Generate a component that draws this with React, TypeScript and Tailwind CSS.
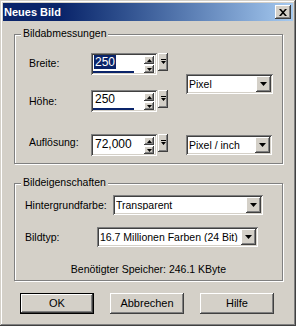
const raised =
  'shadow-[inset_-1px_-1px_#404040,inset_1px_1px_#ffffff,inset_-2px_-2px_#808080,inset_2px_2px_#d4d0c8]';
const sunken =
  'shadow-[inset_1px_1px_#808080,inset_-1px_-1px_#ffffff,inset_2px_2px_#404040,inset_-2px_-2px_#d4d0c8]';

function DownTriangle() {
  return (
    <svg width="7" height="4" viewBox="0 0 7 4">
      <path d="M0 0h7L3.5 4z" fill="#000" />
    </svg>
  );
}

function Dropdown({ value, width }: { value: string; width: number }) {
  return (
    <div className={`flex h-[20px] items-center bg-white ${sunken} pl-[3px] pr-[2px]`} style={{ width }}>
      <span className="flex-1 overflow-hidden whitespace-nowrap text-[10.5px] leading-none text-black">{value}</span>
      <div className={`flex h-[16px] w-[15px] items-center justify-center bg-[#d4d0c8] ${raised}`}>
        <DownTriangle />
      </div>
    </div>
  );
}

function SpinField({ value, selected, bar }: { value: string; selected?: boolean; bar?: boolean }) {
  return (
    <div className="flex items-start">
      <div className={`relative flex h-[22px] w-[66px] bg-white ${sunken} p-[2px]`}>
        <div className="flex flex-1 flex-col">
          <div className="flex h-[15px] items-center pl-[1px]">
            <span
              className={`px-[1px] text-[12px] leading-[14px] ${selected ? 'bg-[#0a246a] text-white' : 'text-black'}`}
            >
              {value}
            </span>
          </div>
          {bar && <div className="mt-[2px] h-[2px] w-[41px] bg-[#0a246a]" />}
        </div>
        <div className="mr-[1px] mt-[1px] flex flex-col gap-[1px]">
          <div className={`flex h-[8px] w-[10px] items-center justify-center bg-[#d4d0c8] ${raised}`}>
            <svg width="5" height="3" viewBox="0 0 5 3">
              <path d="M0 3h5L2.5 0z" fill="#000" />
            </svg>
          </div>
          <div className={`flex h-[8px] w-[10px] items-center justify-center bg-[#d4d0c8] ${raised}`}>
            <svg width="5" height="3" viewBox="0 0 5 3">
              <path d="M0 0h5L2.5 3z" fill="#000" />
            </svg>
          </div>
        </div>
      </div>
      <div className={`ml-[1px] flex h-[18px] w-[10px] items-center justify-center bg-[#d4d0c8] ${raised}`}>
        <svg width="5" height="6" viewBox="0 0 5 6">
          <path d="M0 0h5v1H0z M0 2h5L2.5 5z" fill="#000" />
        </svg>
      </div>
    </div>
  );
}

function Group({ title, className, children }: { title: string; className: string; children: React.ReactNode }) {
  return (
    <div
      className={`relative ml-[11px] w-[269px] border border-[#808080] shadow-[1px_1px_0_#ffffff,inset_1px_1px_0_#ffffff] ${className}`}
    >
      <span className="absolute -top-[8px] left-[6px] bg-[#d4d0c8] px-[2px] text-[10.5px] leading-[13px] text-black">
        {title}
      </span>
      {children}
    </div>
  );
}

function PushButton({ label, isDefault }: { label: string; isDefault?: boolean }) {
  return (
    <div className={`h-[21px] w-[74px] ${isDefault ? 'border border-black' : ''}`}>
      <div className={`flex h-full w-full items-center justify-center bg-[#d4d0c8] ${raised} text-[11px] text-black`}>
        {label}
      </div>
    </div>
  );
}

export default function App() {
  return (
    <div className="h-[326px] w-[296px] bg-[#d4d0c8] p-[3px] font-[family-name:'Liberation_Sans',Arial,sans-serif] shadow-[inset_-1px_-1px_#404040,inset_1px_1px_#d4d0c8,inset_-2px_-2px_#808080,inset_2px_2px_#ffffff]">
      <div className="flex h-[18px] items-center bg-linear-to-r from-[#0a246a] from-[20%] to-[#a6caf0] pl-[1px] pr-[2px]">
        <span className="flex-1 text-[11px] font-bold leading-none text-white">Neues Bild</span>
        <div className={`flex h-[14px] w-[16px] items-center justify-center bg-[#d4d0c8] ${raised}`}>
          <svg width="8" height="7" viewBox="0 0 8 7">
            <path d="M0 0h2l2 2.3L6 0h2L5 3.5 8 7H6L4 4.7 2 7H0l3-3.5z" fill="#000" />
          </svg>
        </div>
      </div>

      <Group title="Bildabmessungen" className="mt-[13px] h-[130px]">
        <div className="flex pl-[14px] pt-[18px]">
          <div className="flex flex-col">
            <div className="flex items-start">
              <span className="mt-[4px] w-[62px] text-[10.5px] leading-[13px]">Breite:</span>
              <SpinField value="250" selected bar />
            </div>
            <div className="mt-[15px] flex items-start">
              <span className="mt-[5px] w-[62px] text-[10.5px] leading-[13px]">Höhe:</span>
              <SpinField value="250" bar />
            </div>
            <div className="mt-[22px] flex items-start">
              <span className="mt-[2px] w-[62px] text-[10.5px] leading-[13px]">Auflösung:</span>
              <SpinField value="72,000" />
            </div>
          </div>
          <div className="ml-[18px] flex flex-col">
            <div className="mt-[21px]">
              <Dropdown value="Pixel" width={87} />
            </div>
            <div className="mt-[41px]">
              <Dropdown value="Pixel / inch" width={86} />
            </div>
          </div>
        </div>
      </Group>

      <Group title="Bildeigenschaften" className="mt-[19px] h-[98px]">
        <div className="flex flex-col pl-[10px] pt-[11px]">
          <div className="flex items-center">
            <span className="w-[88px] text-[10.5px] leading-[13px]">Hintergrundfarbe:</span>
            <Dropdown value="Transparent" width={150} />
          </div>
          <div className="mt-[12px] flex items-center">
            <span className="w-[72px] text-[10.5px] leading-[13px]">Bildtyp:</span>
            <Dropdown value="16.7 Millionen Farben (24 Bit)" width={161} />
          </div>
        </div>
        <div className="mt-[16px] text-center text-[10.5px] leading-[13px]">Benötigter Speicher: 246.1 KByte</div>
      </Group>

      <div className="ml-[17px] mt-[12px] flex gap-[16px]">
        <PushButton label="OK" isDefault />
        <PushButton label="Abbrechen" />
        <PushButton label="Hilfe" />
      </div>
    </div>
  );
}
